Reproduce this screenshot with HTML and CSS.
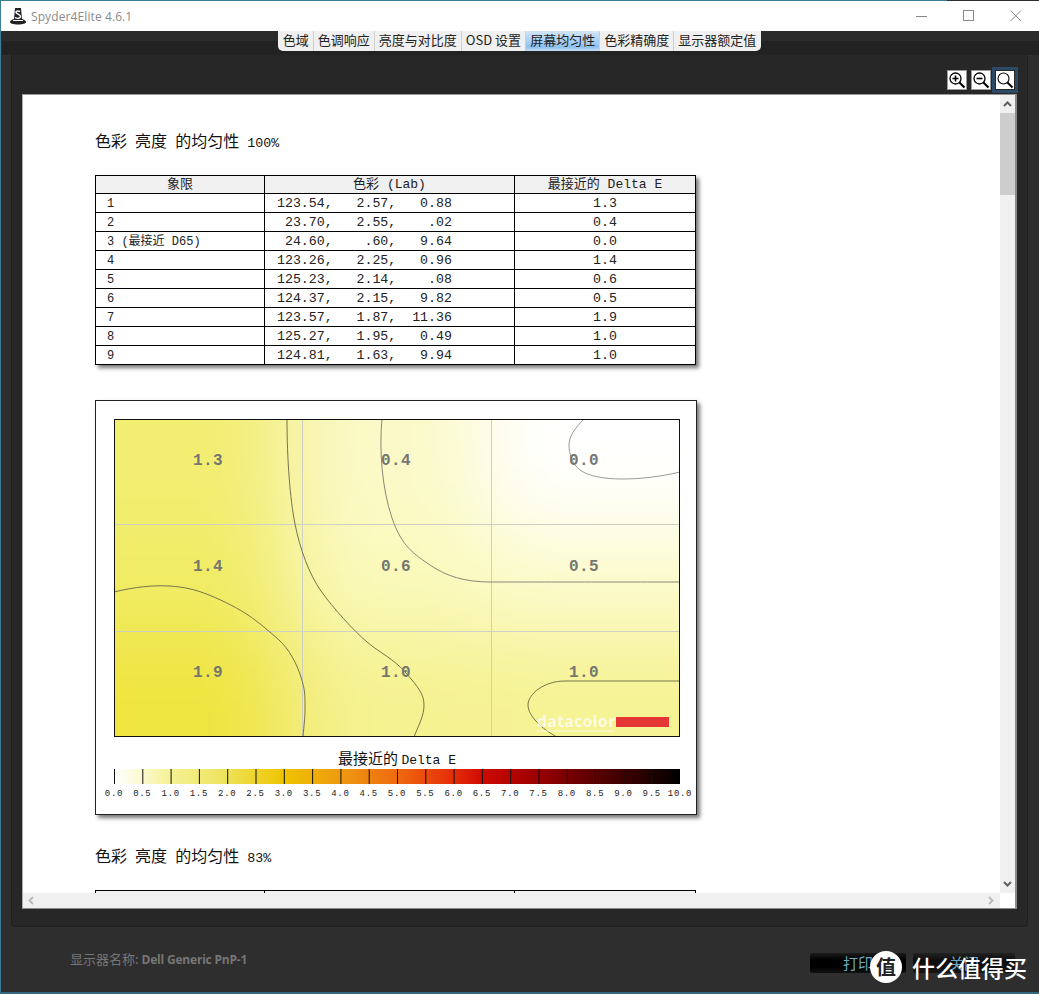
FILE: index.html
```html
<!DOCTYPE html>
<html lang="zh">
<head>
<meta charset="utf-8">
<title>Spyder4Elite 4.6.1</title>
<link rel="stylesheet" href="styles.css">
</head>
<body>
<div class="window">
  <div class="topline"></div>
  <header class="titlebar">
    <svg class="logo" width="16" height="18" viewBox="0 0 16 18">
      <path d="M5 1h6l1 11c2 .5 4 1.500 4 3s-3 2.500-8 2.500S0 16.500 0 15s2-2.500 4-3z" fill="#222"/>
      <path d="M10 4.500C8 3.500 5.500 4 6 5.500S10.500 7.500 10.500 9.500 7 12 5 10.500" fill="none" stroke="#fff" stroke-width="1.400"/>
      <path d="M3 13.500h10" stroke="#fff" stroke-width="1"/>
    </svg>
    <span class="app-name">Spyder4Elite 4.6.1</span>
    <div class="win-controls">
      <svg width="12" height="12" viewBox="0 0 12 12"><path d="M0 6.500h11" stroke="#888"/></svg>
      <svg width="12" height="12" viewBox="0 0 12 12"><rect x=".5" y=".5" width="10" height="10" fill="none" stroke="#888"/></svg>
      <svg width="12" height="12" viewBox="0 0 12 12"><path d="M.5.500l10.500 10.500M11 .5L.5 11" stroke="#888"/></svg>
    </div>
  </header>
  <nav class="tabstrip">
    <span class="tab first">色域</span>
    <span class="tab">色调响应</span>
    <span class="tab">亮度与对比度</span>
    <span class="tab">OSD 设置</span>
    <span class="tab active">屏幕均匀性</span>
    <span class="tab">色彩精确度</span>
    <span class="tab last">显示器额定值</span>
  </nav>
  <main class="panel">
    <div class="toolbar">
      <button class="zoom-btn"><svg width="18" height="18" viewBox="0 0 18 18"><circle cx="7.500" cy="7.500" r="5.500" fill="none" stroke="#000" stroke-width="1.300"/><path d="M11.500 11.500l5 5" stroke="#000" stroke-width="2.200"/><path d="M4.500 7.500h6M7.500 4.500v6" stroke="#000" stroke-width="1.600"/></svg></button>
      <button class="zoom-btn"><svg width="18" height="18" viewBox="0 0 18 18"><circle cx="7.500" cy="7.500" r="5.500" fill="none" stroke="#000" stroke-width="1.300"/><path d="M11.500 11.500l5 5" stroke="#000" stroke-width="2.200"/><path d="M4.500 7.500h6" stroke="#000" stroke-width="1.600"/></svg></button>
      <button class="zoom-btn selected"><svg width="18" height="18" viewBox="0 0 18 18"><circle cx="7.500" cy="7.500" r="5.500" fill="none" stroke="#000" stroke-width="1.100"/><path d="M11.500 11.500l5 5" stroke="#000" stroke-width="2"/></svg></button>
    </div>
    <section class="viewer">
      <div class="doc">
        <h2 class="doc-title">色彩 亮度 的均匀性 <span class="latin">100%</span></h2>
        <table class="data">
          <colgroup><col class="c1"><col class="c2"><col class="c3"></colgroup>
          <thead><tr><th>象限</th><th>色彩 <span class="latin">(Lab)</span></th><th>最接近的 <span class="latin">Delta E</span></th></tr></thead>
          <tbody>
            <tr><td>1</td><td class="lab">123.54,   2.57,   0.88</td><td class="de">1.3</td></tr>
            <tr><td>2</td><td class="lab"> 23.70,   2.55,    .02</td><td class="de">0.4</td></tr>
            <tr><td>3 (最接近 D65)</td><td class="lab"> 24.60,    .60,   9.64</td><td class="de">0.0</td></tr>
            <tr><td>4</td><td class="lab">123.26,   2.25,   0.96</td><td class="de">1.4</td></tr>
            <tr><td>5</td><td class="lab">125.23,   2.14,    .08</td><td class="de">0.6</td></tr>
            <tr><td>6</td><td class="lab">124.37,   2.15,   9.82</td><td class="de">0.5</td></tr>
            <tr><td>7</td><td class="lab">123.57,   1.87,  11.36</td><td class="de">1.9</td></tr>
            <tr><td>8</td><td class="lab">125.27,   1.95,   0.49</td><td class="de">1.0</td></tr>
            <tr><td>9</td><td class="lab">124.81,   1.63,   9.94</td><td class="de">1.0</td></tr>
          </tbody>
        </table>
        <figure class="chart">
          <svg width="600" height="412" viewBox="0 0 600 412">
            <defs>
              <clipPath id="plotclip"><rect width="566" height="318"/></clipPath>
              <filter id="soft" x="-30%" y="-30%" width="160%" height="160%"><feGaussianBlur stdDeviation="42"/></filter>
              <linearGradient id="scale" x1="0" x2="1" y1="0" y2="0">
                <stop offset="0" stop-color="#ffffff"/>
                <stop offset=".05" stop-color="#fbf9cf"/>
                <stop offset=".1" stop-color="#f5f194"/>
                <stop offset=".15" stop-color="#f1ea78"/>
                <stop offset=".2" stop-color="#eee25a"/>
                <stop offset=".25" stop-color="#efd42a"/>
                <stop offset=".3" stop-color="#efc400"/>
                <stop offset=".4" stop-color="#ee9a10"/>
                <stop offset=".5" stop-color="#ef6a10"/>
                <stop offset=".6" stop-color="#e52c08"/>
                <stop offset=".65" stop-color="#cf0a00"/>
                <stop offset=".75" stop-color="#9a0000"/>
                <stop offset=".85" stop-color="#5a0000"/>
                <stop offset=".95" stop-color="#200000"/>
                <stop offset="1" stop-color="#000000"/>
              </linearGradient>
            </defs>
            <g transform="translate(18,18)">
              <g clip-path="url(#plotclip)">
                <rect width="566" height="318" fill="#f6f39c"/>
                <g filter="url(#soft)">
                  <rect x="-120" y="-120" width="300" height="225" fill="#f2ee72"/>
                  <rect x="180" y="-120" width="190" height="225" fill="#fbf9c8"/>
                  <rect x="370" y="-120" width="320" height="225" fill="#ffffff"/>
                  <rect x="-120" y="105" width="300" height="105" fill="#f1ec66"/>
                  <rect x="180" y="105" width="190" height="105" fill="#fafabc"/>
                  <rect x="370" y="105" width="320" height="105" fill="#fcfbce"/>
                  <rect x="-120" y="210" width="300" height="230" fill="#efe540"/>
                  <rect x="180" y="210" width="190" height="230" fill="#f5f291"/>
                  <rect x="370" y="210" width="320" height="230" fill="#f6f394"/>
                </g>
                <path class="grid" d="M188.500 0v318M377.500 0v318M0 105.500h566M0 212.500h566"/>
                <path class="contour dark" d="M173 0C173 40 176 80 181 105S195 155 207 172S240 212 253 223S280 240 292 254S310 275 310 286S305 305 300 318"/>
                <path class="contour mid" d="M268 0C265 30 268 70 278 99S300 135 316 146S350 163 377 163S500 163 566 163"/>
                <path class="contour light" d="M470 0C460 10 455 18 455 26S458 45 466 51S490 60 508 60S545 58 566 53"/>
                <path class="contour dark" d="M0 173C20 168 40 166 55 167S80 170 95 176S125 190 134 196S155 212 165 221S183 245 187 258S191 275 191 288S190 305 189 318"/>
                <path class="contour dark" d="M566 262H451C430 262 414 275 414 286S428 310 443 318"/>
                <text class="val" x="94" y="46">1.3</text>
                <text class="val" x="282" y="46">0.4</text>
                <text class="val" x="470" y="46">0.0</text>
                <text class="val" x="94" y="152">1.4</text>
                <text class="val" x="282" y="152">0.6</text>
                <text class="val" x="470" y="152">0.5</text>
                <text class="val" x="94" y="258">1.9</text>
                <text class="val" x="282" y="258">1.0</text>
                <text class="val" x="470" y="258">1.0</text>
                <text class="brand" x="423" y="308">datacolor</text>
                <path d="M423 312H500" stroke="#fff" stroke-opacity=".7"/>
                <rect x="502" y="298" width="53" height="10" fill="#e53535"/>
              </g>
              <rect class="frame" x=".5" y=".5" width="565" height="317"/>
            </g>
            <text class="bar-title" x="301" y="363">最接近的 <tspan class="latin-t">Delta E</tspan></text>
            <rect x="18" y="368" width="566" height="15" fill="url(#scale)"/>
            <path class="ticks" d="M18.500 368v15M46.800 368v15M75.100 368v15M103.400 368v15M131.700 368v15M160 368v15M188.300 368v15M216.600 368v15M244.900 368v15M273.200 368v15M301.500 368v15M329.800 368v15M358.100 368v15M386.400 368v15M414.700 368v15M443 368v15M471.300 368v15M499.600 368v15M527.900 368v15M556.200 368v15"/>
            <g class="bar-labels">
              <text x="18" y="395">0.0</text><text x="46.300" y="395">0.5</text><text x="74.600" y="395">1.0</text><text x="102.900" y="395">1.5</text><text x="131.200" y="395">2.0</text><text x="159.500" y="395">2.5</text><text x="187.800" y="395">3.0</text><text x="216.100" y="395">3.5</text><text x="244.400" y="395">4.0</text><text x="272.700" y="395">4.5</text><text x="301" y="395">5.0</text><text x="329.300" y="395">5.5</text><text x="357.600" y="395">6.0</text><text x="385.900" y="395">6.5</text><text x="414.200" y="395">7.0</text><text x="442.500" y="395">7.5</text><text x="470.800" y="395">8.0</text><text x="499.100" y="395">8.5</text><text x="527.400" y="395">9.0</text><text x="555.700" y="395">9.5</text><text x="584" y="395">10.0</text>
            </g>
          </svg>
        </figure>
        <h2 class="doc-title second">色彩 亮度 的均匀性 <span class="latin">83%</span></h2>
        <table class="data stub">
          <colgroup><col class="c1"><col class="c2"><col class="c3"></colgroup>
          <thead><tr><th></th><th></th><th></th></tr></thead>
        </table>
      </div>
      <div class="vbar">
        <svg class="arrow" width="15" height="18" viewBox="0 0 15 18"><path d="M4 11l3.500-3.500L11 11" fill="none" stroke="#606060" stroke-width="2"/></svg>
        <div class="vthumb"></div>
        <div class="vspace"></div>
        <svg class="arrow" width="15" height="18" viewBox="0 0 15 18"><path d="M4 7l3.500 3.500L11 7" fill="none" stroke="#606060" stroke-width="2"/></svg>
      </div>
      <div class="hbar">
        <svg width="18" height="15" viewBox="0 0 18 15"><path d="M10 4L6.500 7.500 10 11" fill="none" stroke="#bbb" stroke-width="2"/></svg>
        <svg width="18" height="15" viewBox="0 0 18 15"><path d="M7 4l3.500 3.500L7 11" fill="none" stroke="#bbb" stroke-width="2"/></svg>
      </div>
      <div class="corner"></div>
    </section>
  </main>
  <footer class="footer">
    <span class="monitor">显示器名称: <b>Dell Generic PnP-1</b></span>
    <div class="actions">
      <button class="act print">打印</button>
      <button class="act close">关闭</button>
    </div>
    <div class="watermark">
      <span class="wm-badge">值</span>
      <span class="wm-text">什么值得买</span>
    </div>
  </footer>
</div>
</body>
</html>
```

FILE: styles.css
```css
* { box-sizing: border-box; }
html, body { margin: 0; padding: 0; }
body { background: #2e2e2e; font-family: "Noto Sans CJK SC", sans-serif; }

.window {
  position: relative;
  width: 1039px;
  height: 994px;
  overflow: hidden;
  display: flex;
  flex-direction: column;
  background: #2e2e2e;
  border-left: 1px solid #3b7d94;
  border-bottom: 2px solid #35687c;
}
.topline { height: 1px; width: 947px; background: #3b7d94; flex: none; margin-left: -1px; }

.titlebar {
  height: 30px;
  flex: none;
  background: #fff;
  display: flex;
  align-items: center;
  padding-left: 9px;
}
.logo { flex: none; }
.app-name {
  margin-left: 5px;
  font: 12px "Open Sans", sans-serif;
  letter-spacing: .1px;
  color: #8a8a8a;
}
.win-controls { margin-left: auto; display: flex; gap: 35px; padding-right: 17px; }
.win-controls svg { display: block; }

.tabstrip {
  height: 24px;
  flex: none;
  display: flex;
  justify-content: center;
  align-items: flex-start;
  margin-left: 1px;
  padding-right: 2px;
  background: linear-gradient(#2b2b2b 0 10px, #222 10px);
}
.tab {
  height: 20px;
  line-height: 18px;
  padding: 0 4px;
  font-size: 13px;
  color: #222;
  background: #f0f0f0;
  border-right: 1px solid #cfcfcf;
  white-space: nowrap;
}
.tab.first { padding-left: 5px; border-radius: 0 0 0 5px; }
.tab.last { padding-right: 5px; border-radius: 0 0 5px 0; border-right: 0; }
.tab.active { background: linear-gradient(#d4e6f8, #a5cdf3 55%, #8fc0f0 80%, #c4dcf5); }

.panel {
  width: 1017px;
  height: 872px;
  flex: none;
  margin-left: 10px;
  background: #272727;
  border: 1px solid #202020;
  border-top: 0;
  border-radius: 0 0 4px 4px;
  padding: 0 10px 0 10px;
  display: flex;
  flex-direction: column;
}
.toolbar {
  height: 39px;
  flex: none;
  display: flex;
  justify-content: flex-end;
  align-items: flex-start;
  gap: 6px;
  padding: 16px 3px 0 0;
}
.zoom-btn {
  width: 18px;
  height: 18px;
  padding: 0;
  background: #fff;
  border: 0;
  outline: 1px solid #999;
  display: block;
}
.zoom-btn svg { display: block; }
.zoom-btn.selected { outline: 3px solid #2c4a66; outline-offset: 1px; }

.viewer {
  width: 995px;
  height: 815px;
  flex: none;
  display: grid;
  grid-template-columns: 977px 15px;
  grid-template-rows: 798px 15px;
  background: #fff;
  border-top: 1px solid #999;
  border-left: 1px solid #aaa;
  border-right: 2px solid #8a8a8a;
  border-bottom: 1px solid #8a8a8a;
}
.doc {
  overflow: hidden;
  background: #fff;
  padding: 38px 0 0 72px;
  color: #111;
  font-family: "Liberation Mono", "Noto Sans CJK SC", monospace;
}
.doc-title {
  margin: 0;
  height: 20px;
  line-height: 20px;
  font-size: 16px;
  font-weight: 400;
  word-spacing: -1.500px;
  white-space: nowrap;
}
.doc-title .latin { font-size: 13.300px; }
.doc-title.second { margin-top: 33px; }

.data {
  margin-top: 22px;
  width: 600px;
  table-layout: fixed;
  border-collapse: collapse;
  box-shadow: 3px 3px 4px #777;
  font-size: 13.250px;
  color: #222;
}
.c1 { width: 169px; }
.c2 { width: 250px; }
.c3 { width: 181px; }
.data th, .data td {
  height: 19px;
  padding: 0;
  border: 1px solid #000;
  line-height: 17px;
  font-weight: 400;
}
.data th { height: 18px; line-height: 16px; padding-top: 1px; background: #f0f0f0; text-align: center; font-size: 13px; }
.data th .latin { font-size: 13px; line-height: 16px; }
.data td:first-child { padding: 1px 0 0 11px; line-height: 16px; font-size: 12px; }
.data td.lab { padding-left: 12px; white-space: pre; }
.data td.de { text-align: center; }
.data.stub { box-shadow: none; }

.chart {
  margin: 35px 0 0;
  width: 602px;
  height: 415px;
  background: #fff;
  border: 1px solid #222;
  box-shadow: 3px 3px 4px #777;
}
.chart svg { display: block; }
.grid { fill: none; stroke: #cfcfc4; stroke-width: 1; }
.contour { fill: none; stroke-width: 1; }
.contour.dark { stroke: #77744a; }
.contour.mid { stroke: #8a8878; }
.contour.light { stroke: #9a9a9a; }
.frame { fill: none; stroke: #111; stroke-width: 1; }
.val {
  font: 700 16px "Liberation Mono", monospace;
  fill: #767670;
  text-anchor: middle;
  letter-spacing: .4px;
}
.brand {
  font: 700 15.500px "Open Sans", sans-serif;
  fill: #fff;
  fill-opacity: .75;
  letter-spacing: .5px;
}
.bar-title { font: 15px "Noto Sans CJK SC", sans-serif; fill: #111; text-anchor: middle; }
.latin-t { font: 13px "Liberation Mono", monospace; }
.ticks { stroke: #111; stroke-width: 1; fill: none; }
.bar-labels text { font: 9px "Liberation Mono", monospace; fill: #222; text-anchor: middle; letter-spacing: .7px; }

.vbar {
  display: flex;
  flex-direction: column;
  background: #f0f0f0;
}
.vbar .arrow { flex: none; display: block; }
.vthumb { height: 82px; flex: none; background: #cdcdcd; }
.vspace { flex: 1; }
.hbar {
  background: #f0f0f0;
  display: flex;
  justify-content: space-between;
  align-items: center;
}
.hbar svg { display: block; }
.corner { background: #fff; }

.footer {
  flex: 1;
  display: flex;
  align-items: center;
  padding-left: 69px;
  padding-right: 24px;
  padding-bottom: 2px;
  background: #2e2e2e;
}
.monitor { font-size: 13px; color: #767676; }
.monitor b { font: 700 12px "Open Sans", sans-serif; letter-spacing: -.2px; }
.actions { margin-left: auto; display: flex; gap: 7px; margin-top: 8px; }
.act {
  height: 20px;
  border: 0;
  padding: 0;
  font: 15px/14px "Noto Sans CJK SC", sans-serif;
  color: #6ea9c4;
  border-radius: 2px;
  background: linear-gradient(#1c1c1c, #000 35%, #000 70%, #111);
}
.act.print { width: 96px; }
.act.close { width: 102px; background: linear-gradient(#222, #0c0c0c 40%, #161616); }

.watermark {
  position: absolute;
  left: 869px;
  top: 951px;
  display: flex;
  align-items: center;
  gap: 10px;
}
.wm-badge {
  width: 32px;
  height: 32px;
  border-radius: 50%;
  background: #fff;
  color: #222;
  text-align: center;
  font: 700 20px/31px "Noto Sans CJK SC", sans-serif;
}
.wm-text {
  font: 500 23px/32px "Noto Sans CJK SC", sans-serif;
  color: #fff;
  white-space: nowrap;
}
```
